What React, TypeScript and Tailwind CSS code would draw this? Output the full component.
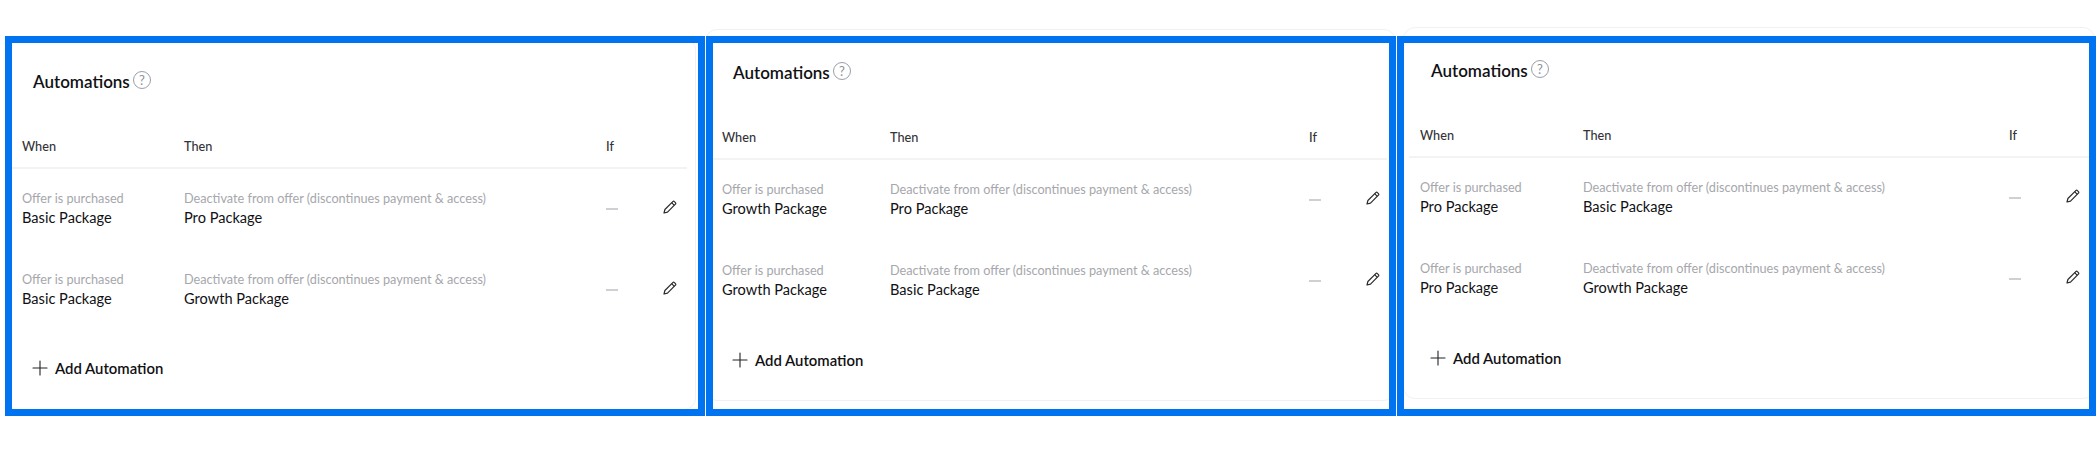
import { Plus } from "lucide-react";

const font = "font-['Lato','Noto_Sans',sans-serif]";

function PencilIcon() {
  return (
    <svg width="14" height="14" viewBox="0 0 14 14" fill="none" stroke="#2b2b2f" strokeWidth="1.2" strokeLinejoin="round">
      <path d="M1 13 L1.9 9.5 L9.8 1.6 C10.3 1.1 10.9 1.1 11.4 1.6 L12.4 2.6 C12.9 3.1 12.9 3.7 12.4 4.2 L4.5 12.1 Z" />
      <path d="M8.7 2.7 L11.3 5.3" />
    </svg>
  );
}

type Rule = { when: string; then: string };

type CardProps = {
  columnClass: string;
  cardClass: string;
  gridClass: string;
  dividerClass: string;
  addClass: string;
  rules: Rule[];
};

function Card({ columnClass, cardClass, gridClass, dividerClass, addClass, rules }: CardProps) {
  return (
    <div className={`relative h-[380px] shrink-0 ${columnClass}`}>
      <div className={`h-[372px] rounded-xl border border-[#f1f1f3] bg-white ${cardClass}`}>
        {/* Title */}
        <div className="mt-[30px] flex h-[24px] items-center gap-[3px] pl-[27px]">
          <span className="text-[17px] font-semibold leading-none text-[#111114]">Automations</span>
          <span className="-mt-[2px] flex h-[18px] w-[18px] items-center justify-center rounded-full border-[1.5px] border-[#9a9ea8] text-[13px] leading-none text-[#8b8f99]">
            ?
          </span>
        </div>

        {/* Table header */}
        <div className={`mt-[32px] ml-[5px] border-b-2 border-[#f3f3f5] ${dividerClass}`}>
          <div className={`grid h-[42px] items-center pt-[2px] pl-[11px] text-[12.7px] font-medium text-[#333338] ${gridClass}`}>
            <span>When</span>
            <span>Then</span>
            <span>If</span>
            <span />
          </div>
        </div>

        {/* Rows */}
        {rules.map((rule) => (
          <div key={rule.then} className={`grid h-[81px] pt-[19px] pl-[16px] ${gridClass}`}>
            <div>
              <div className="h-[20px] text-[12.7px] leading-[20px] text-[#a6a7ac]">Offer is purchased</div>
              <div className="h-[19px] text-[14.6px] leading-[19px] text-[#111114]">{rule.when}</div>
            </div>
            <div>
              <div className="h-[20px] whitespace-nowrap text-[12.7px] leading-[20px] text-[#a6a7ac]">
                Deactivate from offer (discontinues payment &amp; access)
              </div>
              <div className="h-[19px] text-[14.6px] leading-[19px] text-[#111114]">{rule.then}</div>
            </div>
            <div className="pt-[20px]">
              <div className="h-[2px] w-[12px] bg-[#d0d0d4]" />
            </div>
            <div className="pt-[12px]">
              <PencilIcon />
            </div>
          </div>
        ))}

        {/* Add */}
        <div className={`flex h-[24px] items-center gap-[3px] pl-[22px] ${addClass}`}>
          <Plus size={24} strokeWidth={1.1} className="text-[#222226]" />
          <span className="text-[14.9px] font-semibold text-[#111114]">Add Automation</span>
        </div>
      </div>

      {/* Highlight frame */}
      <div className="pointer-events-none absolute inset-0 border-[7px] border-[#0073f0]" />
    </div>
  );
}

export default function App() {
  return (
    <div className={`flex min-h-[463px] gap-px bg-white pt-[36px] pl-[5px] ${font}`}>
      <Card
        columnClass="w-[700px]"
        cardClass="mt-[2px] w-[691px]"
        gridClass="grid-cols-[162px_422px_57px_14px]"
        dividerClass="mr-[8px]"
        addClass="mt-[25px]"
        rules={[
          { when: "Basic Package", then: "Pro Package" },
          { when: "Basic Package", then: "Growth Package" },
        ]}
      />
      <Card
        columnClass="w-[690px]"
        cardClass="-mt-[7px] -ml-px w-[691px]"
        gridClass="grid-cols-[168px_419px_57px_14px]"
        dividerClass="mr-[8px]"
        addClass="mt-[26px]"
        rules={[
          { when: "Growth Package", then: "Pro Package" },
          { when: "Growth Package", then: "Basic Package" },
        ]}
      />
      <Card
        columnClass="w-[699px]"
        cardClass="-mt-[9px] ml-[6px] w-[692px]"
        gridClass="grid-cols-[163px_426px_57px_14px]"
        dividerClass="mr-[3px]"
        addClass="mt-[26px]"
        rules={[
          { when: "Pro Package", then: "Basic Package" },
          { when: "Pro Package", then: "Growth Package" },
        ]}
      />
    </div>
  );
}
